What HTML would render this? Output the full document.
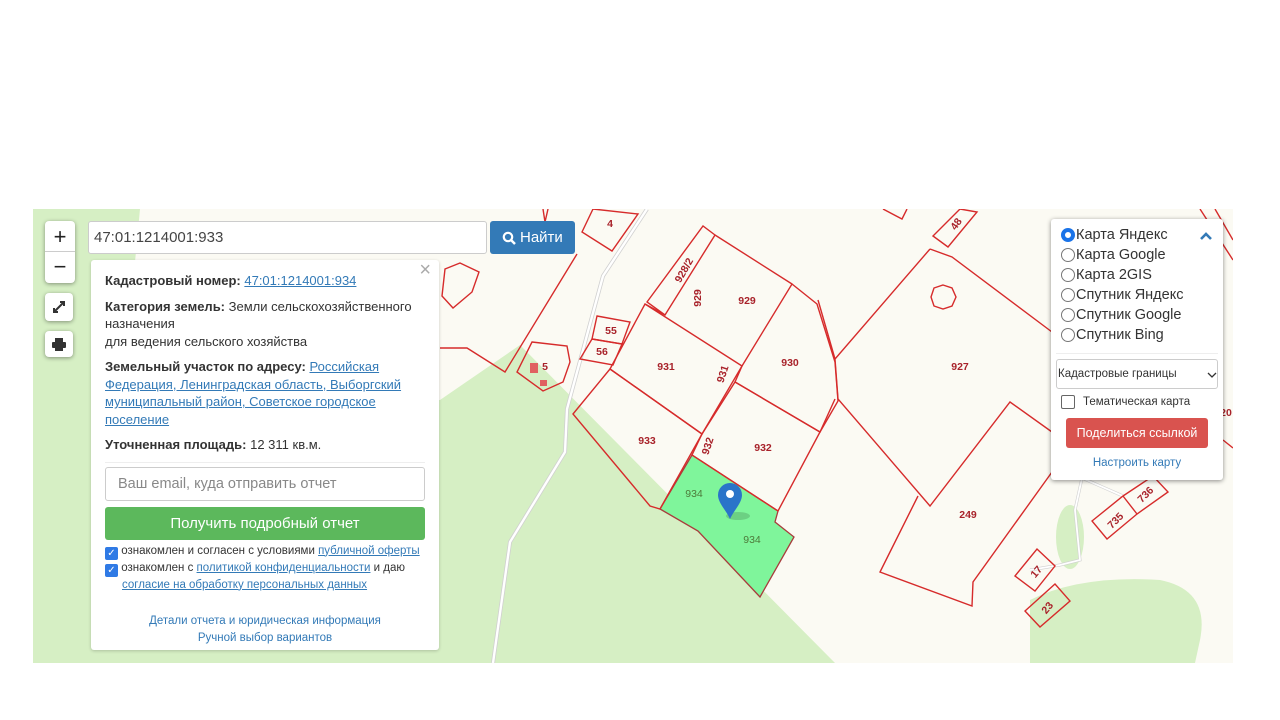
<!DOCTYPE html>
<html><head><meta charset="utf-8"><style>
*{box-sizing:border-box}
body{margin:0;width:1280px;height:720px;background:#fff;font-family:"Liberation Sans",sans-serif;position:relative;overflow:hidden}
#map{position:absolute;left:33px;top:209px;width:1200px;height:454px;background:#fbfaf3;overflow:hidden}
svg{position:absolute;left:0;top:0}
.ctl{position:absolute;background:#fff;border-radius:4px;box-shadow:0 1px 4px rgba(0,0,0,.4)}
a,.lnk{color:#337ab7;text-decoration:underline}
.panel{position:absolute;left:91px;top:260px;width:348px;height:390px;background:#fff;border-radius:3px;box-shadow:0 1px 3px rgba(0,0,0,.2);padding:12px 14px;font-size:13px;color:#333;line-height:17.5px}
.panel p{margin:0 0 8px}
.panel b{color:#333}
.rp{position:absolute;left:1051px;top:219px;width:172px;height:261px;background:#fff;border-radius:3px;box-shadow:0 1px 5px rgba(0,0,0,.45);font-size:14.5px;color:#333}
.rad{height:20px;display:flex;align-items:center;padding-left:10px;position:relative}
.rad i{display:inline-block;width:14px;height:14px;border:1.5px solid #777;border-radius:50%;margin-right:1px}
</style></head><body>
<div id="map">
<svg width="1200" height="454" viewBox="33 209 1200 454">
<g fill="#d6efc4">
<rect x="33" y="209" width="60" height="454"/>
<polygon points="33,209 140,209 135,262 33,262"/>
<polygon points="90,420 440,400 520,345 835,663 90,663"/>
<ellipse cx="1070" cy="537" rx="14" ry="32"/>
<path d="M1030,600 Q1080,575 1160,580 Q1210,590 1200,640 L1195,663 L1030,663 Z"/>
</g>
<path d="M647,209 L603,276 L567,409 L565,452 L510,542 L493,663" stroke="#d0d0d0" stroke-width="4" fill="none"/>
<path d="M647,209 L603,276 L567,409 L565,452 L510,542 L493,663" stroke="#fff" stroke-width="2.4" fill="none"/>
<path d="M1123,496 L1082,478 L1075,510 L1080,560 L1060,565 L1030,570" stroke="#d0d0d0" stroke-width="3" fill="none"/>
<path d="M1123,496 L1082,478 L1075,510 L1080,560 L1060,565 L1030,570" stroke="#fff" stroke-width="1.8" fill="none"/>
<polygon points="660,509 692,455 778,511 775,522 794,537 760,597 698,531" fill="#7ff59b" stroke="#a83c3c" stroke-width="1.3"/>
<g fill="none" stroke="#d62b2b" stroke-width="1.4">
<polygon points="573,414 610,369 702,434 660,509 650,506"/>
<polygon points="692,455 702,434 735,382 820,432 778,511"/>
<polygon points="610,369 645,304 742,366 702,434"/>
<polygon points="742,366 792,284 817,304 835,362 838,401 820,432 735,382"/>
<polygon points="647,302 703,226 715,235 665,315"/>
<polyline points="715,235 792,284"/>
<polyline points="665,315 645,304"/>
<polygon points="597,316 630,322 622,344 592,339"/>
<polygon points="592,339 622,344 613,365 580,359"/>
<polygon points="532,342 567,346 570,362 563,382 543,391 517,372"/>
<polygon points="445,269 460,263 479,272 472,292 453,308 442,296"/>
<polyline points="577,254 505,372 467,348 440,348"/>
<polygon points="582,232 593,209 638,214 612,251"/>
<polyline points="543,209 545,222 548,209"/>
<polyline points="930,249 952,257 1052,332"/>
<polyline points="930,249 835,359 838,399 930,506 1010,402 1052,432"/>
<polygon points="943,285 952,288 956,297 952,306 943,309 934,306 931,297 934,288"/>
<polyline points="918,496 880,572 972,606 973,582 1052,472"/>
<polygon points="933,236 960,209 977,212 948,247"/>
<polyline points="883,209 902,219 907,209"/>
<polygon points="1092,521 1123,496 1153,476 1168,492 1137,514 1107,539"/>
<line x1="1123" y1="496" x2="1137" y2="514"/>
<polygon points="1015,576 1037,549 1055,566 1035,591"/>
<polygon points="1025,611 1055,584 1070,601 1040,627"/>
<polyline points="835,359 818,300"/>
<polyline points="835,399 820,432"/>
<polyline points="1200,209 1233,260"/>
<polyline points="1215,209 1233,240"/>
<polyline points="1223,440 1233,448"/>
</g>
<rect x="530" y="363" width="8" height="10" fill="#e06060"/>
<rect x="540" y="380" width="7" height="6" fill="#e06060"/>
<g fill="#a8222a" font-size="10.5" font-weight="bold" font-family="Liberation Sans" text-anchor="middle">
<text x="747" y="304">929</text><text x="666" y="370">931</text><text x="790" y="366">930</text>
<text x="647" y="444">933</text><text x="763" y="451">932</text><text x="960" y="370">927</text>
<text x="968" y="518">249</text><text x="611" y="334">55</text><text x="602" y="355">56</text><text x="545" y="370">5</text>
<text x="610" y="227">4</text>
<text transform="translate(701,298) rotate(-90)">929</text>
<text transform="translate(726,375) rotate(-72)">931</text>
<text transform="translate(711,447) rotate(-72)">932</text>
<text transform="translate(687,272) rotate(-60)">928/2</text>
<text transform="translate(959,226) rotate(-55)">48</text>
<text transform="translate(1118,523) rotate(-45)">735</text>
<text transform="translate(1148,497) rotate(-45)">736</text>
<text transform="translate(1039,574) rotate(-50)">17</text>
<text transform="translate(1050,610) rotate(-50)">23</text>
<text x="1226" y="416">20</text>
</g>
<g fill="#4d7a3a" font-size="10.5" font-family="Liberation Sans" text-anchor="middle"><text x="694" y="497">934</text><text x="752" y="543">934</text></g>
<ellipse cx="738" cy="516" rx="12" ry="4" fill="rgba(0,0,0,.15)"/>
<path d="M730,519 C726,510 718,503 718,495 A12,12 0 0 1 742,495 C742,503 734,510 730,519 Z" fill="#2a74c9"/>
<circle cx="730" cy="494" r="4" fill="#fff"/>
</svg>
</div>
<div class="ctl" style="left:45px;top:221px;width:30px;height:62px"><div style="height:31px;border-bottom:1px solid #ccc;font-size:22px;text-align:center;line-height:31px;color:#222">+</div><div style="font-size:22px;text-align:center;line-height:29px;color:#222">−</div></div>
<div class="ctl" style="left:45px;top:293px;width:28px;height:28px"><svg width="28" height="28"><path d="M9,19 L19,9 M15,9 L19,9 L19,13 M9,15 L9,19 L13,19" stroke="#333" stroke-width="2" fill="none"/></svg></div>
<div class="ctl" style="left:45px;top:331px;width:28px;height:26px"><svg width="28" height="26"><rect x="10" y="7" width="8" height="4" fill="#333"/><rect x="7" y="11" width="14" height="6" rx="1" fill="#333"/><rect x="10" y="16" width="8" height="4" fill="#333"/></svg></div>
<div style="position:absolute;left:88px;top:221px;width:399px;height:33px;background:#fff;border:1px solid #ccc;border-radius:3px;font-size:15px;color:#444;padding:7px 5px">47:01:1214001:933</div>
<div style="position:absolute;left:490px;top:221px;width:85px;height:33px;background:#337ab7;border-radius:3px;color:#fff;font-size:15px;white-space:nowrap;display:flex;align-items:center;padding-left:12px"><svg width="14" height="14" style="position:static;margin-right:4px"><circle cx="6" cy="6" r="4.2" stroke="#fff" stroke-width="2.2" fill="none"/><line x1="9" y1="9" x2="13" y2="13" stroke="#fff" stroke-width="2.5"/></svg>Найти</div>
<div class="panel">
<div style="position:absolute;right:8px;top:2px;font-size:20px;color:#aaa">×</div>
<p><b>Кадастровый номер:</b> <a>47:01:1214001:934</a></p>
<p><b>Категория земель:</b> Земли сельскохозяйственного назначения<br>для ведения сельского хозяйства</p>
<p><b>Земельный участок по адресу:</b> <a>Российская Федерация, Ленинградская область, Выборгский муниципальный район, Советское городское поселение</a></p>
<p style="padding-bottom:8px;border-bottom:1px solid #eee"><b>Уточненная площадь:</b> 12 311 кв.м.</p>
<div style="border:1px solid #ccc;border-radius:3px;height:34px;font-size:14.5px;color:#888;padding:8px 12px;margin-top:-4px">Ваш email, куда отправить отчет</div>
<div style="background:#5cb85c;border-radius:3px;height:33px;margin-top:6px;color:#fff;font-size:15px;text-align:center;line-height:33px">Получить подробный отчет</div>
<div style="font-size:11.5px;line-height:16px;margin-top:3px;color:#333">
<div><span style="display:inline-block;width:13px;height:13px;background:#2f7ae5;border-radius:2px;color:#fff;font-size:10px;line-height:13px;text-align:center;vertical-align:-2px">✓</span> ознакомлен и согласен с условиями <a>публичной оферты</a></div>
<div><span style="display:inline-block;width:13px;height:13px;background:#2f7ae5;border-radius:2px;color:#fff;font-size:10px;line-height:13px;text-align:center;vertical-align:-2px">✓</span> ознакомлен с <a>политикой конфиденциальности</a> и даю</div>
<div style="padding-left:17px"><a>согласие на обработку персональных данных</a></div>
</div>
<div style="text-align:center;font-size:11.5px;line-height:17px;margin-top:20px;color:#337ab7">Детали отчета и юридическая информация<br>Ручной выбор вариантов</div>
</div>
<div class="rp">
<div style="padding-top:6px">
<div class="rad"><i style="border:4px solid #1a73e8;border-radius:50%;background:#fff"></i>Карта Яндекс<svg width="14" height="10" style="left:148px;top:6px"><path d="M2,8 L7,3 L12,8" stroke="#337ab7" stroke-width="2.6" fill="none"/></svg></div>
<div class="rad"><i></i>Карта Google</div>
<div class="rad"><i></i>Карта 2GIS</div>
<div class="rad"><i></i>Спутник Яндекс</div>
<div class="rad"><i></i>Спутник Google</div>
<div class="rad"><i></i>Спутник Bing</div>
</div>
<div style="border-top:1px solid #eee;margin:8px 5px 0"></div>
<div style="margin:5px 5px 0;height:30px;border:1px solid #ccc;border-radius:3px;font-size:11.5px;padding:8px 0 0 1px;position:relative">Кадастровые границы<svg width="10" height="8" style="left:150px;top:11px"><path d="M1,2 L5,6 L9,2" stroke="#333" stroke-width="1.3" fill="none"/></svg></div>
<div style="margin:6px 0 0 10px;font-size:11.5px;display:flex;align-items:center"><span style="display:inline-block;width:14px;height:14px;border:1.5px solid #666;border-radius:2px;margin-right:8px"></span>Тематическая карта</div>
<div style="margin:9px 15px 0;height:30px;background:#d9534f;border-radius:3px;color:#fff;font-size:12.5px;text-align:center;line-height:30px">Поделиться ссылкой</div>
<div style="text-align:center;font-size:11.5px;color:#337ab7;margin-top:9px">Настроить карту</div>
</div>
</body></html>
